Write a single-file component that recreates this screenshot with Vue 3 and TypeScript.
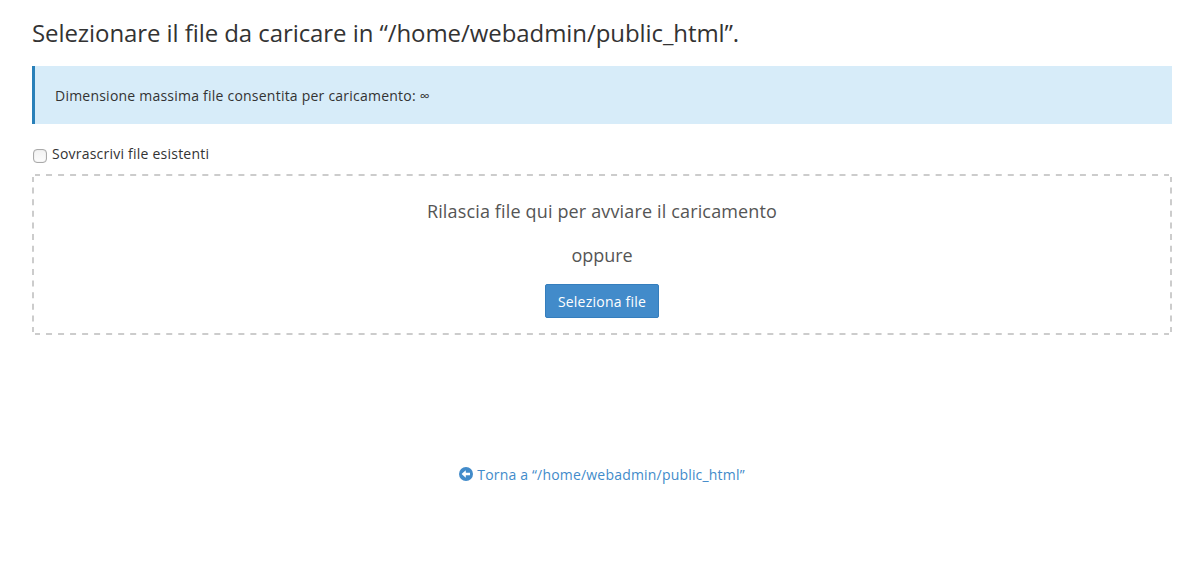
<script setup lang="ts">
import { ref } from 'vue'

const dir = '/home/webadmin/public_html'
const overwrite = ref(false)
</script>

<template>
  <div class="upload-page">
    <h1 class="page-title">Selezionare il file da caricare in “{{ dir }}”.</h1>

    <div class="callout">Dimensione massima file consentita per caricamento: ∞</div>

    <label class="overwrite">
      <input v-model="overwrite" type="checkbox" />
      <span>Sovrascrivi file esistenti</span>
    </label>

    <div class="drop-zone">
      <!-- dashed frame with open corners -->
      <svg class="frame" width="1140" height="161">
        <g stroke-dasharray="6 6.022" stroke-dashoffset="1">
          <path d="M3 1H1137" />
          <path d="M3 160H1137" />
        </g>
        <g stroke-dasharray="6 5.62" stroke-dashoffset="1">
          <path d="M1 3V158" />
          <path d="M1139 3V158" />
        </g>
      </svg>
      <p>Rilascia file qui per avviare il caricamento</p>
      <p class="or">oppure</p>
      <button type="button" class="btn-primary">Seleziona file</button>
    </div>

    <a class="return-link" href="#">
      <svg width="14" height="14" viewBox="0 0 14 14">
        <circle cx="7" cy="7" r="7" fill="currentColor" />
        <path d="M2.6 7 6.8 3.2V5.8H11V8.2H6.8V10.8Z" fill="#fff" />
      </svg>
      <span>Torna a “{{ dir }}”</span>
    </a>
  </div>
</template>

<style>
body {
  background: #fff;
}
</style>

<style scoped>
.upload-page {
  box-sizing: border-box;
  height: 565px;
  padding: 20px 22px 0 32px;
  overflow: hidden;
  display: flex;
  flex-direction: column;
  font-family: 'Open Sans', sans-serif;
  font-size: 14px;
  line-height: 20px;
  letter-spacing: 0.225px;
  color: #333;
}
.page-title {
  margin: 0 0 20px;
  font-size: 24px;
  font-weight: 400;
  line-height: 26px;
  letter-spacing: -0.075px;
}
.callout {
  box-sizing: border-box;
  height: 58px;
  padding: 20px;
  border-left: 3px solid #2980b9;
  background: #d7ecf9;
}
.overwrite {
  display: flex;
  height: 20px;
  margin: 20px 0 10px;
}
.overwrite input {
  appearance: none;
  box-sizing: border-box;
  flex: none;
  width: 14px;
  height: 14px;
  margin: 5px 5px 0 1px;
  border: 1px solid #aaa;
  border-radius: 4px;
  background: linear-gradient(#f2f2f2, #fcfcfc);
  box-shadow: inset 0 0 1px #bbb;
}
.drop-zone {
  position: relative;
  box-sizing: border-box;
  height: 161px;
  padding-top: 24px;
  text-align: center;
  color: #555;
}
.frame {
  position: absolute;
  top: 0;
  left: 0;
  fill: none;
  stroke: #ccc;
  stroke-width: 2;
}
.drop-zone p {
  margin: 0 0 18px;
  font-size: 18px;
  line-height: 26px;
  letter-spacing: 0.15px;
}
.drop-zone .or {
  letter-spacing: -0.05px;
}
.btn-primary {
  position: relative;
  display: block;
  width: 114px;
  height: 34px;
  margin: -2px auto 0;
  padding: 2px 0 0;
  border: 1px solid #357ebd;
  border-radius: 2px;
  background: #428bca;
  color: #fff;
  font: inherit;
  letter-spacing: inherit;
}
.return-link {
  display: flex;
  align-self: center;
  gap: 4px;
  margin-top: 130px;
  color: #428bca;
  letter-spacing: 0.19px;
  text-decoration: none;
}
.return-link svg {
  margin-top: 2px;
}
</style>
